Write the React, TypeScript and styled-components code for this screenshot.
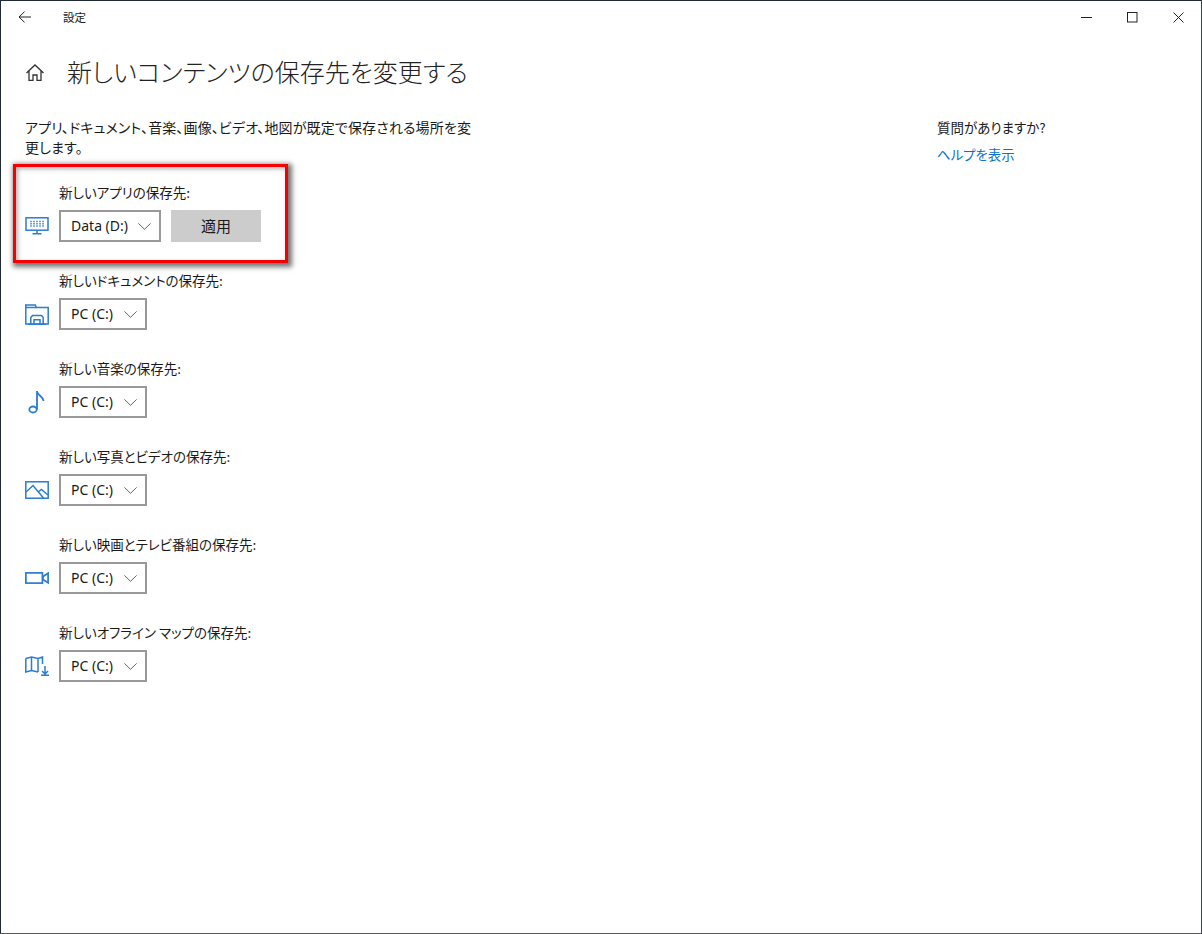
import React from "react";
import styled, { createGlobalStyle } from "styled-components";

const Global = createGlobalStyle`
  html, body { margin: 0; padding: 0; background: #fff; }
  body { font-family: "Noto Sans CJK JP", "Noto Sans", sans-serif; font-feature-settings: "palt"; color: #1a1a1a; }
`;
const Win = styled.div`
  position: relative; box-sizing: border-box; width: 1202px; height: 934px; background: #fff;
  border: 1px solid #1f2a36; border-right-color: #3a4450; border-bottom-color: #5c5c5c; overflow: hidden;
`;
const TitleBar = styled.header`
  display: flex; align-items: center; height: 32px; color: #1a1a1a;
`;
const BackBtn = styled.div`
  width: 46px; display: flex; justify-content: center; svg { display: block; }
`;
const TitleText = styled.span`
  font-size: 11.5px; margin-left: 16px; flex: 1; line-height: 32px;
`;
const WinBtn = styled.div`
  width: 46px; height: 32px; display: flex; align-items: center; justify-content: center;
`;
const Main = styled.main`
  display: grid; grid-template-columns: 936px 1fr; padding: 0;
`;
const Left = styled.section`
  display: flex; flex-direction: column;
`;
const Heading = styled.div`
  display: flex; align-items: center; padding: 16px 0 0 24px; height: 44px;
`;
const HomeIcon = styled.svg`
  width: 20px; height: 20px; margin: 4px 22px 0 0; flex: none;
`;
const H1 = styled.h1`
  margin: 0; font-size: 25px; font-weight: 300; letter-spacing: 0; line-height: 44px; color: #222;
`;
const Desc = styled.p`
  margin: 24px 0 0 24px; width: 450px; font-size: 14px; letter-spacing: .13px; line-height: 20px; color: #1a1a1a;
`;
const Rows = styled.div`
  display: flex; flex-direction: column; gap: 24px; margin: 21px 0 0 24px;
`;
const Row = styled.div`
  display: grid; grid-template-columns: 34px auto; grid-template-rows: 32px 32px; width: max-content;
`;
const Label = styled.div`
  grid-column: 2; font-size: 13.5px; line-height: 20px; padding-top: 4px; color: #1a1a1a; white-space: pre;
`;
const IconCell = styled.div`
  grid-column: 1; grid-row: 2; display: flex; align-items: center; svg { display: block; }
`;
const Controls = styled.div`
  grid-column: 2; grid-row: 2; display: flex; gap: 10px;
`;
const Select = styled.div<{ $w: number }>`
  box-sizing: border-box; width: ${(p) => p.$w}px; height: 32px; border: 2px solid #999; background: #fff;
  display: flex; align-items: center; justify-content: space-between; padding: 0 8px 0 10px;
  font-family: "Noto Sans", sans-serif; font-size: 14px; color: #1a1a1a; svg { flex: none; }
`;
const SelectValue = styled.span`
  margin-top: -2px;
`;
const Apply = styled.div`
  width: 90px; height: 30px; padding-bottom: 2px; background: #ccc; display: flex; align-items: center; justify-content: center;
  font-size: 15px; color: #1a1a1a;
`;
const Right = styled.aside`
  display: flex; flex-direction: column; padding-top: 84px;
`;
const Question = styled.div`
  font-size: 13.5px; line-height: 20px; color: #1a1a1a;
`;
const HelpLink = styled.a`
  margin-top: 7px; font-size: 13.4px; line-height: 20px; color: #0a6fcf;
`;
const Highlight = styled.div`
  position: absolute; left: 12px; top: 163px; width: 275px; height: 99px; box-sizing: border-box;
  border: 3px solid #f40000; box-shadow: 2px 2px 5px 2px rgba(0,0,0,.55), inset 2px 2px 4px rgba(0,0,0,.3);
  pointer-events: none;
`;

const Chev = () => (
  <svg width="13" height="7" viewBox="0 0 13 7" fill="none" stroke="#666" strokeWidth="1"><path d="M.4.4 6.500 6.300 12.600.4" /></svg>
);
const blue = "#2b7cd3";
const S = { fill: "none", stroke: blue, strokeWidth: 1.5 } as const;
const Monitor = () => (
  <svg width="24" height="18" viewBox="0 0 24 18" {...S}>
    <rect x="1" y=".8" width="22" height="12.400" />
    <path d="M12 13.500V16.500M7.500 16.800h9" />
    <path d="M5 4.500h14M5 6.800h14M5 9.100h14" strokeDasharray="2 1" strokeWidth="1.500" opacity=".7" />
  </svg>
);
const Folder = () => (
  <svg width="24" height="21" viewBox="0 0 24 21" {...S}>
    <path d="M.8 20V1h9.500l1 2.500h11.900V20z" />
    <path d="M.8 3.500h10.500" />
    <path d="M5.800 20v-6.500l1.700-2h9l1.700 2V20M9 20v-4.300h6V20" />
    <path d="M3 20.200h18" />
  </svg>
);
const Note = () => (
  <svg width="24" height="24" viewBox="0 0 24 24" fill="none" stroke={blue} strokeWidth="1.800">
    <ellipse cx="8" cy="19.500" rx="3.700" ry="3" />
    <path d="M12 19.500V1C12 5.500 18.500 6 18.500 11" />
  </svg>
);
const Picture = () => (
  <svg width="24" height="18" viewBox="0 0 24 18" {...S}>
    <rect x=".8" y=".8" width="22.400" height="16.400" />
    <path d="M1 11 8 4.500 18.500 17" />
    <path d="M13 11l3.500-2.500L23 14" />
  </svg>
);
const Video = () => (
  <svg width="24" height="12" viewBox="0 0 24 12" fill="none" stroke={blue} strokeWidth="1.700">
    <rect x=".9" y=".9" width="16.500" height="10.200" />
    <path d="M18 4.500 23.100 1.200v9.600L18 7.500z" />
  </svg>
);
const MapDown = () => (
  <svg width="24" height="20" viewBox="0 0 24 20" {...S}>
    <path d="M.8 2.500 6.500 1l6.500 1.500L17.500 1v7M13 2.500V16M6.500 1v13.500M.8 2.500v13.500l5.700-1.500L13 16" />
    <path d="M20 10v8M17 15l3 3 3-3M16 19.300h8" />
  </svg>
);

const rows: { label: string; value: string; w: number; icon: React.ReactNode; apply?: boolean }[] = [
  { label: "新しいアプリの保存先:", value: "Data (D:)", w: 102, icon: <Monitor />, apply: true },
  { label: "新しいドキュメントの保存先:", value: "PC (C:)", w: 88, icon: <Folder /> },
  { label: "新しい音楽の保存先:", value: "PC (C:)", w: 88, icon: <Note /> },
  { label: "新しい写真とビデオの保存先:", value: "PC (C:)", w: 88, icon: <Picture /> },
  { label: "新しい映画とテレビ番組の保存先:", value: "PC (C:)", w: 88, icon: <Video /> },
  { label: "新しいオフライン マップの保存先:", value: "PC (C:)", w: 88, icon: <MapDown /> },
];

export default function App() {
  return (
    <Win>
      <Global />
      <TitleBar>
        <BackBtn>
          <svg width="13" height="12" viewBox="0 0 13 12" fill="none" stroke="#222" strokeWidth="1"><path d="M6.500.7 1 6l5.500 5.300M1 6h12" /></svg>
        </BackBtn>
        <TitleText>設定</TitleText>
        <WinBtn><svg width="11" height="1" viewBox="0 0 11 1"><rect width="11" height="1" fill="#222" /></svg></WinBtn>
        <WinBtn><svg width="11" height="11" viewBox="0 0 11 11" fill="none" stroke="#222"><rect x=".5" y=".5" width="9.500" height="9.500" /></svg></WinBtn>
        <WinBtn><svg width="11" height="11" viewBox="0 0 11 11" fill="none" stroke="#222"><path d="M.5.5l10 10M10.500.5l-10 10" /></svg></WinBtn>
      </TitleBar>
      <Main>
        <Left>
          <Heading>
            <HomeIcon viewBox="0 0 20 20" fill="none" stroke="#333" strokeWidth="1.300">
              <path d="M1.500 10 10 2l8.500 8M4 8v9.300h4v-5.300h4v5.300h4V8" />
            </HomeIcon>
            <H1>新しいコンテンツの保存先を変更する</H1>
          </Heading>
          <Desc>アプリ、ドキュメント、音楽、画像、ビデオ、地図が既定で保存される場所を変更します。</Desc>
          <Rows>
            {rows.map((r) => (
              <Row key={r.label}>
                <Label>{r.label}</Label>
                <IconCell>{r.icon}</IconCell>
                <Controls>
                  <Select $w={r.w}><SelectValue>{r.value}</SelectValue><Chev /></Select>
                  {r.apply && <Apply>適用</Apply>}
                </Controls>
              </Row>
            ))}
          </Rows>
        </Left>
        <Right>
          <Question>質問がありますか?</Question>
          <HelpLink>ヘルプを表示</HelpLink>
        </Right>
      </Main>
      <Highlight />
    </Win>
  );
}
